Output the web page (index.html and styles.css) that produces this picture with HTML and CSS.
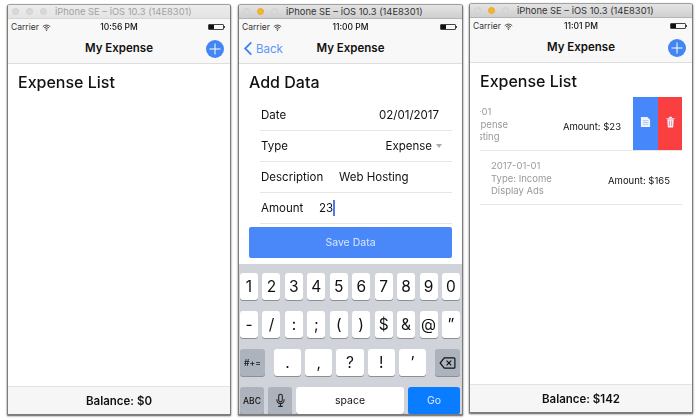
FILE: index.html
```html
<!DOCTYPE html>
<html lang="en">
    <head>
        <meta charset="UTF-8" />
        <title>My Expense</title>
        <link rel="stylesheet" href="styles.css">
    </head>
    <body>
        <!-- list, empty -->
        <div class="window win-a">
            <div class="titlebar">
                <i class="light"></i><i class="light"></i><i class="light"></i>
                <span class="title">iPhone SE – iOS 10.3 (14E8301)</span>
            </div>
            <div class="status">
                <span class="carrier">Carrier
                    <svg class="wifi" viewBox="0 0 12 9"><path d="M1 3.4a7 7 0 0 1 10 0M2.7 5a4.6 4.6 0 0 1 6.6 0M4.4 6.6a2.2 2.2 0 0 1 3.2 0"/><circle cx="6" cy="8" r=".8"/></svg>
                </span>
                <span class="clock">10:56 PM</span>
                <span class="battery"><b></b></span>
            </div>
            <div class="nav">
                <span class="nav-title">My Expense</span>
                <span class="add"><svg viewBox="0 0 18 18"><path d="M9 3.5v11M3.5 9h11"/></svg></span>
            </div>
            <div class="content">
                <h1>Expense List</h1>
            </div>
            <div class="balance">Balance: $0</div>
        </div>

        <!-- add form -->
        <div class="window win-b">
            <div class="titlebar active">
                <i class="light"></i><i class="light yellow"></i><i class="light"></i>
                <span class="title">iPhone SE – iOS 10.3 (14E8301)</span>
            </div>
            <div class="status">
                <span class="carrier">Carrier
                    <svg class="wifi" viewBox="0 0 12 9"><path d="M1 3.4a7 7 0 0 1 10 0M2.7 5a4.6 4.6 0 0 1 6.6 0M4.4 6.6a2.2 2.2 0 0 1 3.2 0"/><circle cx="6" cy="8" r=".8"/></svg>
                </span>
                <span class="clock">11:00 PM</span>
                <span class="battery"><b></b></span>
            </div>
            <div class="nav">
                <span class="back">
                    <svg viewBox="0 0 10 16"><path d="M8.5 1.5 2 8l6.500 6.500"/></svg>
                    Back
                </span>
                <span class="nav-title">My Expense</span>
            </div>
            <div class="content form-page">
                <h1>Add Data</h1>
                <div class="form">
                    <div class="field split date"><span>Date</span><span>02/01/2017</span></div>
                    <div class="field split type"><span>Type</span><span>Expense<i class="caret"></i></span></div>
                    <div class="field"><span class="label">Description</span><span>Web Hosting</span></div>
                    <div class="field"><span class="label short">Amount</span><span>23<i class="cursor"></i></span></div>
                </div>
                <div class="save">Save Data</div>
            </div>
            <div class="keyboard">
                <div class="key-row">
                    <span class="key">1</span><span class="key">2</span><span class="key">3</span><span class="key">4</span><span class="key">5</span>
                    <span class="key">6</span><span class="key">7</span><span class="key">8</span><span class="key">9</span><span class="key">0</span>
                </div>
                <div class="key-row">
                    <span class="key">-</span><span class="key">/</span><span class="key">:</span><span class="key">;</span><span class="key">(</span>
                    <span class="key">)</span><span class="key">$</span><span class="key">&amp;</span><span class="key">@</span><span class="key">”</span>
                </div>
                <div class="key-row third">
                    <span class="key dark small">#+=</span>
                    <span class="punct">
                        <span class="key">.</span><span class="key">,</span><span class="key">?</span><span class="key">!</span><span class="key">’</span>
                    </span>
                    <span class="key dark">
                        <svg class="del" viewBox="0 0 18 13"><path d="M5.500 1H16a1 1 0 0 1 1 1v9a1 1 0 0 1-1 1H5.500L1 6.500zM8 4l5 5M13 4 8 9"/></svg>
                    </span>
                </div>
                <div class="key-row bottom">
                    <span class="key dark small abc">ABC</span>
                    <span class="key dark mic">
                        <svg viewBox="0 0 10 16"><rect x="3" y="1" width="4" height="8.500" rx="2"/><path d="M1 6.500v1a4 4 0 0 0 8 0v-1M5 11.500V14M2.500 14.500h5"/></svg>
                    </span>
                    <span class="key space">space</span>
                    <span class="key go">Go</span>
                </div>
            </div>
        </div>

        <!-- list, first row swiped -->
        <div class="window win-c">
            <div class="titlebar active">
                <i class="light"></i><i class="light yellow"></i><i class="light"></i>
                <span class="title">iPhone SE – iOS 10.3 (14E8301)</span>
            </div>
            <div class="status">
                <span class="carrier">Carrier
                    <svg class="wifi" viewBox="0 0 12 9"><path d="M1 3.4a7 7 0 0 1 10 0M2.7 5a4.6 4.6 0 0 1 6.6 0M4.4 6.6a2.2 2.2 0 0 1 3.2 0"/><circle cx="6" cy="8" r=".8"/></svg>
                </span>
                <span class="clock">11:01 PM</span>
                <span class="battery"><b></b></span>
            </div>
            <div class="nav">
                <span class="nav-title">My Expense</span>
                <span class="add"><svg viewBox="0 0 18 18"><path d="M9 3.500v11M3.500 9h11"/></svg></span>
            </div>
            <div class="content">
                <h1>Expense List</h1>
                <div class="rows">
                    <div class="row swiped">
                        <div class="row-inner">
                            <div class="meta">2017-01-01<br>Type: Expense<br>Web Hosting</div>
                            <div class="amount">Amount: $23</div>
                        </div>
                        <div class="actions">
                            <span class="edit">
                                <svg viewBox="0 0 12 13"><path class="sheet" d="M1 1h7l3 3v8H1z"/><path class="lines" d="M3 5h6M3 7h6M3 9h6"/></svg>
                            </span>
                            <span class="trash">
                                <svg viewBox="0 0 12 13"><path class="sheet" d="M2.500 3.500h7l-.6 9H3.100zM1.500 2h9v1h-9zM4.500 .8h3V2h-3z"/><path class="holes" d="M4.800 5v6M7.200 5v6"/></svg>
                            </span>
                        </div>
                    </div>
                    <div class="row">
                        <div class="row-inner">
                            <div class="meta">2017-01-01<br>Type: Income<br>Display Ads</div>
                            <div class="amount">Amount: $165</div>
                        </div>
                    </div>
                </div>
            </div>
            <div class="balance">Balance: $142</div>
        </div>
    </body>
</html>
```

FILE: styles.css
```css
* {
    padding: 0;
    margin: 0;
    box-sizing: border-box;
}

html,
body {
    height: 100%;
    width: 100%;
    overflow: hidden;
    background-color: #fff;
}

body {
    font-family: Inter, "Noto Sans", "Liberation Sans", sans-serif;
    color: #111;
}

/* simulator windows sit freely on the desktop */
.window {
    position: absolute;
    display: flex;
    flex-direction: column;
    border: 1px solid #7b7b7b;
    border-top-color: #a0a0a0;
    border-radius: 3px 3px 0 0;
    background-color: #fff;
    box-shadow: 0 1px 2px 0 #555;
    overflow: hidden;
    filter: blur(0.3px);
}

.win-a {
    left: 7px;
    top: 4px;
    width: 224px;
    height: 411px;
}

.win-b {
    left: 238px;
    top: 4px;
    width: 225px;
    height: 411px;
}

.win-c {
    left: 469px;
    top: 3px;
    width: 224px;
    height: 410px;
}

.titlebar {
    flex: none;
    display: flex;
    align-items: center;
    height: 14px;
    padding-left: 4px;
    background: linear-gradient(#ececec, #e4e4e4);
    border-bottom: 1px solid #d6d6d6;
}

.titlebar.active {
    background: linear-gradient(#e4e4e4, #cfcfcf);
    border-bottom-color: #b5b5b5;
}

.light {
    flex: none;
    width: 7px;
    height: 7px;
    margin-right: 7px;
    border-radius: 50%;
    background-color: #d9d9d9;
    border: 1px solid #d0d0d0;
}

.light.yellow {
    background-color: #f5b62f;
    border-color: #e8a92a;
}

.title {
    margin-left: 1px;
    font-size: 9.4px;
    white-space: nowrap;
    color: #a2a2a2;
}

.active .title {
    color: #333;
}

.status {
    flex: none;
    display: flex;
    justify-content: space-between;
    align-items: center;
    height: 16px;
    padding: 0 5px 0 3px;
    font-size: 8.500px;
    background-color: #f8f8f8;
}

.status .clock {
    font-weight: 500;
    position: absolute;
    left: 0;
    right: 0;
    text-align: center;
}

.carrier {
    display: flex;
    align-items: center;
    gap: 3px;
    color: #333;
}

.wifi {
    width: 9px;
    height: 7px;
    fill: #222;
}

.wifi path {
    fill: none;
    stroke: #222;
    stroke-width: 1.1;
}

.battery {
    position: relative;
    width: 16px;
    height: 6px;
    border: 1px solid #444;
    border-radius: 1px;
    margin-right: 1px;
}

.battery b {
    display: block;
    width: 5px;
    height: 4px;
    background-color: #111;
}

.battery::after {
    content: "";
    position: absolute;
    right: -2px;
    top: 1px;
    width: 1px;
    height: 2px;
    background-color: #444;
}

.nav {
    flex: none;
    position: relative;
    display: flex;
    align-items: center;
    justify-content: center;
    height: 29px;
    padding-bottom: 2px;
    background-color: #f8f8f8;
    border-bottom: 1px solid #dedede;
}

.nav-title {
    font-size: 11.500px;
    font-weight: 600;
}

.add {
    position: absolute;
    right: 6px;
    top: 5px;
    width: 18px;
    height: 18px;
    border-radius: 50%;
    background-color: #4286f5;
}

.add svg {
    display: block;
    width: 18px;
    height: 18px;
    fill: none;
    stroke: #fff;
    stroke-width: 1;
}

.back {
    position: absolute;
    left: 4px;
    top: 6px;
    display: flex;
    align-items: center;
    gap: 3px;
    font-size: 11.500px;
    color: #5b95f7;
}

.back svg {
    width: 10px;
    height: 15px;
    fill: none;
    stroke: #3f86f5;
    stroke-width: 2;
}

.content {
    flex: 1;
    min-height: 0;
    padding: 8px 10px 0;
}

h1 {
    font-size: 16px;
    font-weight: 500;
    line-height: 20px;
    color: #111;
}

.balance {
    flex: none;
    height: 28px;
    line-height: 28px;
    text-align: center;
    font-size: 11.500px;
    font-weight: 600;
    background-color: #f6f6f6;
    border-top: 1px solid #e2e2e2;
}

/* add form */
.form-page {
    padding-bottom: 6px;
}

.form {
    margin: 8px 0 0 11px;
}

.field {
    display: flex;
    align-items: center;
    height: 31px;
    padding: 0 1px;
    font-size: 11.500px;
    color: #111;
    border-bottom: 1px solid #e6e6e6;
}

.field.split {
    justify-content: space-between;
}

.date {
    padding-right: 13px;
}

.type {
    padding-right: 10px;
}

.label {
    width: 78px;
}

.label.short {
    width: 58px;
}

.caret {
    display: inline-block;
    margin-left: 4px;
    vertical-align: 2px;
    border-left: 3px solid transparent;
    border-right: 3px solid transparent;
    border-top: 4px solid #aaa;
}

.cursor {
    display: inline-block;
    width: 2px;
    height: 16px;
    vertical-align: -4px;
    background-color: #5578e8;
}

.save {
    height: 31px;
    margin-top: 3px;
    line-height: 31px;
    text-align: center;
    font-size: 10.500px;
    color: #d8e6ff;
    background-color: #4a88fa;
    border-radius: 2px;
}

/* keyboard */
.keyboard {
    flex: none;
    display: flex;
    flex-direction: column;
    gap: 11px;
    height: 150px;
    padding: 9px 1px 0 0;
    background-color: #d0d4da;
}

.key-row {
    display: flex;
    justify-content: space-between;
    padding: 0 1px;
    height: 27px;
}

.key {
    display: flex;
    align-items: center;
    justify-content: center;
    width: 18px;
    background-color: #fff;
    border-radius: 3px;
    box-shadow: 0 1px 0 #8c8f94;
    font-size: 15.500px;
    color: #111;
}

.third .key.dark {
    width: 25px;
}

.punct {
    display: flex;
    gap: 4px;
    margin: 0 9px;
    flex: 1;
}

.punct .key {
    flex: 1;
    width: auto;
}

.key.dark {
    background-color: #adb3bc;
}

.key.small {
    font-size: 8.500px;
    font-weight: 500;
}

.del {
    width: 17px;
    height: 12px;
    fill: none;
    stroke: #111;
    stroke-width: 1.300;
}

.bottom {
    justify-content: flex-start;
    gap: 4px;
}

.key.abc {
    width: 24px;
}

.key.mic {
    width: 24px;
}

.mic svg {
    width: 9px;
    height: 15px;
    fill: none;
    stroke: #222;
    stroke-width: 1.200;
}

.key.space {
    width: 108px;
    font-size: 10.500px;
}

.key.go {
    width: 52px;
    font-size: 10.500px;
    color: #d8e6ff;
    background-color: #0a7cff;
}

/* expense rows */
.rows {
    margin-top: 6px;
}

.row {
    position: relative;
    height: 54px;
    overflow: hidden;
    border-bottom: 1px solid #e6e6e6;
}

.row-inner {
    display: flex;
    align-items: center;
    justify-content: space-between;
    height: 100%;
    padding: 3px 12px 0 11px;
}

.swiped .row-inner {
    transform: translateX(-49px);
}

.meta {
    font-size: 9.500px;
    line-height: 12.500px;
    color: #999;
}

.amount {
    margin-top: 3px;
    font-size: 9.500px;
    color: #111;
}

.actions {
    position: absolute;
    right: 0;
    top: 0;
    bottom: 0;
    display: flex;
}

.actions span {
    display: flex;
    align-items: center;
    justify-content: center;
    width: 25px;
    padding-bottom: 4px;
}

.actions span.trash {
    width: 24px;
    background-color: #fa3f40;
}

.edit {
    background-color: #4687fb;
}

.actions svg {
    width: 11px;
    height: 12px;
}

.sheet {
    fill: #f0f4ff;
}

.lines {
    fill: none;
    stroke: #8fb3f8;
    stroke-width: .7;
}

.holes {
    fill: none;
    stroke: #fa3f40;
    stroke-width: .6;
}
```
